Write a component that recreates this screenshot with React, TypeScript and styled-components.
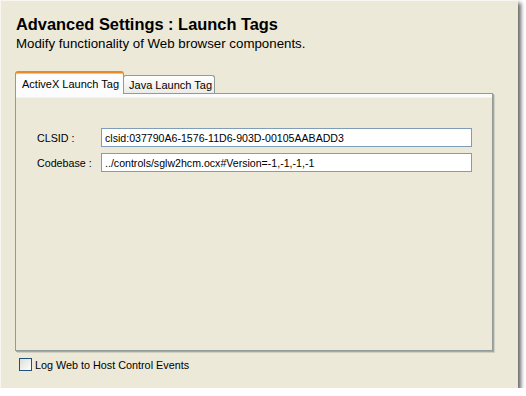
import React, { useState } from 'react'
import styled, { createGlobalStyle } from 'styled-components'

const GlobalStyle = createGlobalStyle`
  html, body {
    margin: 0;
    padding: 0;
    background: #ffffff;
  }
  body {
    font-family: "Liberation Sans", Arial, sans-serif;
  }
`

const Window = styled.div`
  box-sizing: border-box;
  width: 518px;
  height: 388px;
  background: #ece9d8;
  border-top: 1px solid #f7f6f0;
  border-left: 1px solid #f7f6f0;
  box-shadow: 3px 3px 4px rgba(0, 0, 0, 0.6);
  display: flex;
  flex-direction: column;
`

const Header = styled.div`
  padding: 13px 0 0 15px;
`

const Title = styled.h1`
  margin: 0;
  font-size: 16.4px;
  line-height: 20px;
  font-weight: bold;
  color: #000;
`

const Subtitle = styled.p`
  margin: 2px 0 0;
  font-size: 13.3px;
  line-height: 16px;
  color: #000;
`

const TabArea = styled.div`
  margin: 19px 0 0 14px;
  width: 478px;
  display: flex;
  flex-direction: column;
`

const TabStrip = styled.div`
  display: flex;
  align-items: flex-end;
  height: 22px;
  position: relative;
  z-index: 1;
`

const Tab = styled.div<{ $active?: boolean }>`
  box-sizing: border-box;
  font-size: 11px;
  color: #000;
  white-space: nowrap;
  border: 1px solid #919b9c;
  border-bottom: none;
  border-radius: 3px 3px 0 0;
  ${(p) =>
    p.$active
      ? `
    height: 23px;
    margin-bottom: -1px;
    padding: 5px 4px 0 6px;
    background: #fcfcfe;
    border-top: 2px solid #e68b2c;
    box-shadow: inset 0 1px 0 #ffc73c;
  `
      : `
    height: 18px;
    margin-left: -1px;
    padding: 3px 2px 0 5px;
    background: linear-gradient(#ffffff, #ecebe6);
  `}
`

const Panel = styled.div`
  box-sizing: border-box;
  height: 258px;
  border: 1px solid #919b9c;
  background: linear-gradient(#fcfcfe 0, #fcfcfe 3px, #ece9d8 4px);
  box-shadow: 1px 1px 0 #a9a796, 2px 2px 0 #d0cebf;
  padding: 34px 0 0 21px;
  display: flex;
  flex-direction: column;
  gap: 6px;
`

const FieldRow = styled.div`
  display: flex;
  align-items: center;
`

const FieldLabel = styled.label`
  width: 64px;
  font-size: 10.7px;
  color: #000;
`

const TextInput = styled.input`
  box-sizing: border-box;
  width: 371px;
  height: 19px;
  border: 1px solid #7f9db9;
  background: #fff;
  padding: 0 3px;
  font-family: "Liberation Sans", Arial, sans-serif;
  font-size: 10.6px;
  color: #000;
  outline: none;
`

const CheckRow = styled.label`
  display: flex;
  align-items: center;
  gap: 3px;
  margin: 7px 0 0 18px;
  font-size: 10.8px;
  color: #000;
`

const Box = styled.span<{ $on: boolean }>`
  box-sizing: border-box;
  width: 13px;
  height: 13px;
  border: 1px solid #1c5180;
  background: linear-gradient(135deg, #dcdcd7, #ffffff);
  display: flex;
  align-items: center;
  justify-content: center;
  font-size: 10px;
  color: #21a121;
  line-height: 1;
`

const fields = [
  { label: 'CLSID :', value: 'clsid:037790A6-1576-11D6-903D-00105AABADD3' },
  { label: 'Codebase :', value: '../controls/sglw2hcm.ocx#Version=-1,-1,-1,-1' },
]

export default function App() {
  const [tab, setTab] = useState(0)
  const [logEvents, setLogEvents] = useState(false)

  return (
    <>
      <GlobalStyle />
      <Window>
        <Header>
          <Title>Advanced Settings : Launch Tags</Title>
          <Subtitle>Modify functionality of Web browser components.</Subtitle>
        </Header>
        <TabArea>
          <TabStrip>
            {['ActiveX Launch Tag', 'Java Launch Tag'].map((t, i) => (
              <Tab key={t} $active={tab === i} onClick={() => setTab(i)}>
                {t}
              </Tab>
            ))}
          </TabStrip>
          <Panel>
            {tab === 0 &&
              fields.map((f) => (
                <FieldRow key={f.label}>
                  <FieldLabel>{f.label}</FieldLabel>
                  <TextInput defaultValue={f.value} />
                </FieldRow>
              ))}
          </Panel>
        </TabArea>
        <CheckRow onClick={() => setLogEvents(!logEvents)}>
          <Box $on={logEvents}>{logEvents ? '✓' : ''}</Box>
          Log Web to Host Control Events
        </CheckRow>
      </Window>
    </>
  )
}
